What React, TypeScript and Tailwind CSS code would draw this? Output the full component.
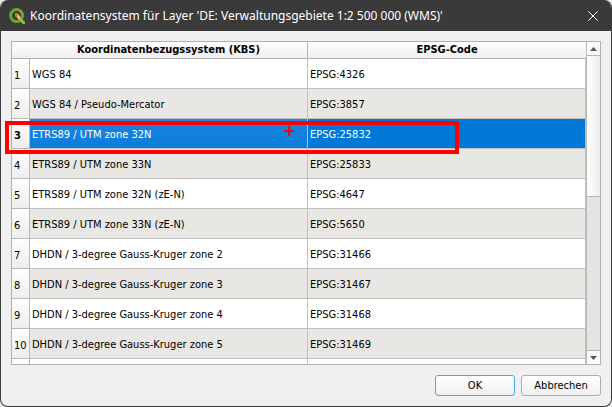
import React, { useState } from "react";
import clsx from "clsx";

const systems = [
  { name: "WGS 84", code: "EPSG:4326" },
  { name: "WGS 84 / Pseudo-Mercator", code: "EPSG:3857" },
  { name: "ETRS89 / UTM zone 32N", code: "EPSG:25832" },
  { name: "ETRS89 / UTM zone 33N", code: "EPSG:25833" },
  { name: "ETRS89 / UTM zone 32N (zE-N)", code: "EPSG:4647" },
  { name: "ETRS89 / UTM zone 33N (zE-N)", code: "EPSG:5650" },
  { name: "DHDN / 3-degree Gauss-Kruger zone 2", code: "EPSG:31466" },
  { name: "DHDN / 3-degree Gauss-Kruger zone 3", code: "EPSG:31467" },
  { name: "DHDN / 3-degree Gauss-Kruger zone 4", code: "EPSG:31468" },
  { name: "DHDN / 3-degree Gauss-Kruger zone 5", code: "EPSG:31469" },
];

function QgisLogo() {
  return (
    <svg className="h-4 w-4 flex-shrink-0" viewBox="0 0 16 16">
      <circle cx="7.6" cy="7.6" r="6" fill="none" stroke="#6fa32c" strokeWidth="3" />
      <path d="M8.8 10.8 10.8 8.8 16 14v2h-2.2z" fill="#8cbf3a" />
      <path d="M6 5.6h2.6l2.6 2.8v2.8H9.6L6 7.8z" fill="#f3c58a" />
      <path d="M6 5.6h2.8v2.8L7.6 9.2 6 7.8z" fill="#ee7913" />
    </svg>
  );
}

function TitleBar() {
  return (
    <div className="flex h-[31px] flex-shrink-0 items-center bg-[#3a3a3a] pl-2 pr-2.5 text-white">
      <QgisLogo />
      <h1 className="ml-[5px] flex-1 truncate font-['Noto_Sans',sans-serif] text-[12px]">
        Koordinatensystem für Layer 'DE: Verwaltungsgebiete 1:2 500 000 (WMS)'
      </h1>
      <button type="button" aria-label="Schließen" className="flex h-4 w-4 items-center justify-center">
        <svg className="h-2.5 w-2.5" viewBox="0 0 10 10" stroke="currentColor" strokeWidth="1">
          <path d="M0.3 0.3 9.7 9.7M9.7 0.3 0.3 9.7" />
        </svg>
      </button>
    </div>
  );
}

function ScrollBar() {
  return (
    <div className="flex w-[14px] flex-shrink-0 flex-col border-l border-[#b8b8b8] bg-[#e4e4e4]">
      <button
        type="button"
        aria-label="Nach oben"
        className="flex h-3.5 items-center justify-center border-b border-[#b8b8b8] bg-[#fafafa]"
      >
        <svg className="h-1 w-[7px]" viewBox="0 0 7 4" fill="#555">
          <path d="M0 4 3.5 0 7 4z" />
        </svg>
      </button>
      <div className="h-[141px] border-b border-[#b8b8b8] bg-linear-to-r from-white to-[#ededed]" />
      <div className="flex-1" />
      <button
        type="button"
        aria-label="Nach unten"
        className="flex h-3.5 items-center justify-center border-t border-[#b8b8b8] bg-[#fafafa]"
      >
        <svg className="h-1 w-[7px]" viewBox="0 0 7 4" fill="#555">
          <path d="M0 0h7L3.5 4z" />
        </svg>
      </button>
    </div>
  );
}

function SystemTable() {
  const [selected, setSelected] = useState(2);
  return (
    <div className="min-w-0 flex-1 overflow-hidden">
      <table className="w-full table-fixed border-separate border-spacing-0 text-left">
        <colgroup>
          <col className="w-[18px]" />
          <col />
          <col />
        </colgroup>
        <thead>
          <tr className="h-[17px] bg-linear-to-b from-white to-[#ededed] text-center leading-4">
            <td className="border-b border-[#b0b0b0] p-0" />
            <th className="border-b border-r border-[#b0b0b0] p-0 font-bold">Koordinatenbezugssystem (KBS)</th>
            <th className="border-b border-[#b0b0b0] p-0 font-bold">EPSG-Code</th>
          </tr>
        </thead>
        <tbody>
          {systems.map((system, i) => {
            const active = i === selected;
            return (
              <tr
                key={system.code}
                onClick={() => setSelected(i)}
                aria-selected={active}
                className={clsx(
                  "h-[30px]",
                  active ? "bg-[#0078d7] text-white" : i % 2 ? "bg-[#e8e7e3]" : "bg-white"
                )}
              >
                <th
                  scope="row"
                  className={clsx(
                    "border-b border-r border-[#b8b8b8] bg-linear-to-b from-white to-[#ededed] p-0 pl-0.5 pt-1 text-black",
                    active ? "font-bold" : "font-normal"
                  )}
                >
                  {i + 1}
                </th>
                <td
                  className={clsx(
                    "border-b border-r border-[#c0c0c0] p-0 pl-0.5 pt-0.5",
                    active && "bg-linear-to-b from-[#1a86dd] to-[#0a7ddb]"
                  )}
                >
                  {system.name}
                </td>
                <td className="border-b border-r border-[#c0c0c0] p-0 pl-0.5 pt-0.5">{system.code}</td>
              </tr>
            );
          })}
          <tr className="h-[30px] bg-white">
            <td className="border-r border-[#b8b8b8] p-0" />
            <td className="border-r border-[#c0c0c0] p-0" />
            <td className="border-r border-[#c0c0c0] p-0" />
          </tr>
        </tbody>
      </table>
    </div>
  );
}

function Marker() {
  return (
    <>
      <div className="pointer-events-none absolute -left-[7px] right-[141px] top-[79px] h-[33px] border-4 border-[#ff0000]" />
      <svg
        className="pointer-events-none absolute left-[272px] top-[84px] h-2.5 w-2.5"
        viewBox="0 0 10 10"
        stroke="#ff0000"
        strokeWidth="2"
      >
        <path d="M5 0v10M0 5h10" />
      </svg>
    </>
  );
}

const button =
  "h-[21px] w-20 rounded-[3px] border bg-linear-to-b from-white to-[#f0f0f0] text-center";

function App() {
  return (
    <div className="bg-[#e6e6e6]">
      <div className="flex h-screen flex-col overflow-hidden rounded-lg border border-t-0 border-[#3a3a3a] bg-[#f0f0f0] font-['DejaVu_Sans_Condensed','DejaVu_Sans',sans-serif] text-[11px] leading-4 text-black">
        <TitleBar />
        <div className="flex min-h-0 flex-1 flex-col gap-2.5 px-2.5 pb-2.5 pt-2.5">
          <div className="relative flex min-h-0 flex-1 border border-[#b0b0b0]">
            <SystemTable />
            <ScrollBar />
            <Marker />
          </div>
          <div className="flex justify-end gap-1.5">
            <button type="button" className={clsx(button, "border-[#3daee9]")}>
              OK
            </button>
            <button type="button" className={clsx(button, "border-[#adadad]")}>
              Abbrechen
            </button>
          </div>
        </div>
      </div>
    </div>
  );
}

export default App;
